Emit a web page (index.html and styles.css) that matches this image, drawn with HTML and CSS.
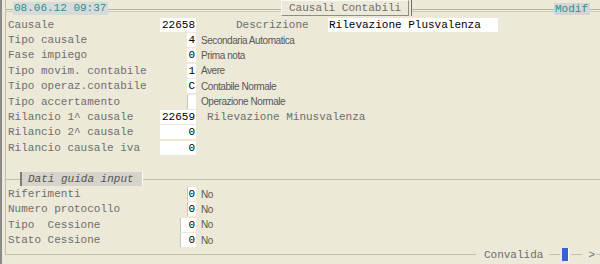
FILE: index.html
```html
<!DOCTYPE html>
<html lang="it">
<head>
    <meta charset="UTF-8">
    <title>Causali Contabili</title>
    <link rel="stylesheet" href="styles.css">
</head>
<body>
<div class="screen">
    <div class="frame">
        <div class="topbar">
            <span class="stamp">08.06.12 09:37</span>
            <span class="title">Causali Contabili</span>
            <span class="mode">Modif</span>
        </div>

        <div class="rows main">
            <div class="row">
                <span class="lbl">Causale</span>
                <span class="cell"><span class="box w5">22658</span></span>
                <span class="lbl2">Descrizione</span>
                <span class="box wide">Rilevazione Plusvalenza</span>
            </div>
            <div class="row">
                <span class="lbl">Tipo causale</span>
                <span class="cell"><span class="box w1">4</span></span>
                <span class="desc">Secondaria Automatica</span>
            </div>
            <div class="row">
                <span class="lbl">Fase impiego</span>
                <span class="cell"><span class="box w1">0</span></span>
                <span class="desc">Prima nota</span>
            </div>
            <div class="row">
                <span class="lbl">Tipo movim. contabile</span>
                <span class="cell"><span class="box w1">1</span></span>
                <span class="desc">Avere</span>
            </div>
            <div class="row">
                <span class="lbl">Tipo operaz.contabile</span>
                <span class="cell"><span class="box w1">C</span></span>
                <span class="desc">Contabile Normale</span>
            </div>
            <div class="row">
                <span class="lbl">Tipo accertamento</span>
                <span class="cell"><span class="box w1 inset"></span></span>
                <span class="desc">Operazione Normale</span>
            </div>
            <div class="row">
                <span class="lbl">Rilancio 1^ causale</span>
                <span class="cell"><span class="box w5">22659</span></span>
                <span class="ref">Rilevazione Minusvalenza</span>
            </div>
            <div class="row">
                <span class="lbl">Rilancio 2^ causale</span>
                <span class="cell"><span class="box w5">0</span></span>
            </div>
            <div class="row">
                <span class="lbl">Rilancio causale iva</span>
                <span class="cell"><span class="box w5">0</span></span>
            </div>
        </div>

        <div class="legend"><span class="legend-tab">Dati guida input</span></div>

        <div class="rows sub">
            <div class="row">
                <span class="lbl">Riferimenti</span>
                <span class="cell"><span class="box w1 inset">0</span></span>
                <span class="desc">No</span>
            </div>
            <div class="row">
                <span class="lbl">Numero protocollo</span>
                <span class="cell"><span class="box w1 inset">0</span></span>
                <span class="desc">No</span>
            </div>
            <div class="row">
                <span class="lbl">Tipo&nbsp; Cessione</span>
                <span class="cell"><span class="box w2 inset">0</span></span>
                <span class="desc">No</span>
            </div>
            <div class="row">
                <span class="lbl">Stato Cessione</span>
                <span class="cell"><span class="box w2 inset">0</span></span>
                <span class="desc">No</span>
            </div>
        </div>

        <div class="footer">
            <span class="rule"></span>
            <span class="ok">Convalida</span>
            <span class="rule short"></span>
            <span class="cursor"></span>
            <span class="rule short"></span>
            <span class="arrow">&gt;</span>
            <span class="rule tail"></span>
        </div>
    </div>
</div>
</body>
</html>
```

FILE: styles.css
```css
body {
    margin: 0;
    background: #ece9d8;
    font-family: "Liberation Mono", "DejaVu Sans Mono", monospace;
    font-size: 11px;
}
.screen {
    width: 598px;
    height: 255px;
    padding-top: 9px;
    border-left: 2px solid #8a8a86;
    background: #ece9d8;
    overflow: hidden;
}
.frame {
    margin-left: 3px;
    border-left: 1px solid #c2bfae;
    height: 255px;
}

/* top bar: etched double line with the badges over it */
.topbar {
    margin-top: -9px;
    height: 16px;
    display: flex;
    align-items: flex-start;
    padding-left: 7px;
    background:
        linear-gradient(#b8b5a5, #b8b5a5) 0 9px / 100% 1px no-repeat,
        linear-gradient(#cfccbc, #cfccbc) 0 11px / 100% 1px no-repeat;
}
.stamp {
    margin-top: 2px;
    width: 94px;
    height: 13px;
    line-height: 13px;
    padding-left: 1px;
    background: #d5dbda;
    color: #2f8f8f;
}
.title {
    margin-left: 173px;
    width: 119px;
    height: 14px;
    line-height: 14px;
    padding-left: 7px;
    background: #ece9d8;
    color: #6e6e6e;
    border-top: 1px solid #f8f8f4;
    border-left: 1px solid #f8f8f4;
    border-right: 1px solid #8c8c88;
    border-bottom: 1px solid #8c8c88;
    box-shadow: 2px 0 0 #ece9d8, 3px 0 0 #707070;
}
.mode {
    margin-left: 145px;
    margin-top: 3px;
    width: 35px;
    height: 12px;
    line-height: 12px;
    padding-left: 1px;
    background: #d4d6d4;
    color: #2f8f8f;
}

/* form rows */
.rows {
    display: grid;
    grid-auto-rows: 15.4px;
    padding-left: 2px;
}
.rows.main {
    padding-top: 1px;
}
.rows.sub {
    grid-auto-rows: 15.3px;
    padding-top: 1px;
}
.row {
    display: flex;
    align-items: center;
    white-space: pre;
}
.lbl {
    width: 152px;
    color: #6e6e6e;
}
.cell {
    width: 36px;
    display: flex;
    justify-content: flex-end;
}
.box {
    height: 14px;
    line-height: 14px;
    background: #fff;
    color: #000;
    text-align: right;
    box-sizing: border-box;
}
.box.w1 { width: 9px; padding-right: 1px; }
.box.w2 { width: 16px; padding-right: 1px; }
.box.w5 { width: 36px; padding-right: 1px; }
.box.inset { border-left: 1px solid #c9c7bd; }
.box.wide {
    width: 170px;
    text-align: left;
    padding-left: 1px;
}
.lbl2 {
    margin-left: 40px;
    width: 92px;
    color: #6e6e6e;
}
.desc {
    margin-left: 5px;
    font-family: "Liberation Sans", Arial, sans-serif;
    font-size: 10px;
    letter-spacing: -0.45px;
    color: #585858;
}
.ref {
    margin-left: 11px;
    color: #6e6e6e;
}

/* sub section header */
.legend {
    margin-top: 16px;
    height: 14px;
    padding-left: 14px;
    display: flex;
    background: linear-gradient(#c2bfae, #c2bfae) 0 7px / 100% 1px no-repeat;
}
.legend-tab {
    height: 14px;
    line-height: 14px;
    padding: 0 8px 0 6px;
    background: #d6d3cb;
    border-left: 2px solid #7c7c78;
    border-right: 1px solid #fafaf6;
    font-style: italic;
    color: #555;
}

/* bottom bar */
.footer {
    height: 14px;
    display: flex;
    align-items: center;
    color: #6e6e6e;
}
.rule {
    flex: 1;
    height: 1px;
    background: #c2bfae;
}
.rule.short {
    flex: 0 0 11px;
}
.rule.tail {
    flex: 0 0 4px;
}
.ok {
    margin: 0 6px 0 8px;
}
.cursor {
    width: 7px;
    height: 13px;
    margin: 0 2px;
    background: #3366cc;
    border-right: 1px solid #fff;
    box-sizing: border-box;
}
.arrow {
    margin: 0 1px 0 6px;
}
```
